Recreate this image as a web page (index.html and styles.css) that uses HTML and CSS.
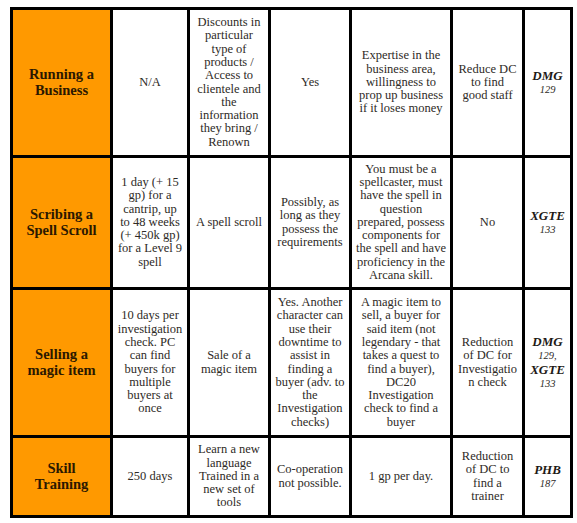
FILE: index.html
```html
<!DOCTYPE html>
<html lang="en">

<head>
    <meta charset="UTF-8">
    <title>Downtime activities</title>
    <link rel="stylesheet" href="styles.css">
</head>

<body>
    <table class="dt-table">
        <colgroup>
            <col class="c-name">
            <col class="c-time">
            <col class="c-gain">
            <col class="c-help">
            <col class="c-req">
            <col class="c-prof">
            <col class="c-src">
        </colgroup>
        <tr class="r1">
            <th>Running a Business</th>
            <td class="time">N/A</td>
            <td>Discounts in particular type of products / Access to clientele and the information they bring / Renown</td>
            <td>Yes</td>
            <td>Expertise in the business area, willingness to prop up business if it loses money</td>
            <td class="prof">Reduce DC to find good staff</td>
            <td class="src"><b>DMG</b><br><span>129</span></td>
        </tr>
        <tr class="r2">
            <th>Scribing a Spell Scroll</th>
            <td class="time">1 day (+ 15 gp) for a cantrip, up to 48 weeks (+ 450k gp) for a Level 9 spell</td>
            <td>A spell scroll</td>
            <td>Possibly, as long as they possess the requirements</td>
            <td>You must be a spellcaster, must have the spell in question prepared, possess components for the spell and have proficiency in the Arcana skill.</td>
            <td class="prof">No</td>
            <td class="src"><b>XGTE</b><br><span>133</span></td>
        </tr>
        <tr class="r3">
            <th>Selling a magic item</th>
            <td class="time">10 days per investigation check. PC can find buyers for multiple buyers at once</td>
            <td>Sale of a magic item</td>
            <td>Yes. Another character can use their downtime to assist in finding a buyer (adv. to the Investigation checks)</td>
            <td>A magic item to sell, a buyer for said item (not legendary - that takes a quest to find a buyer), DC20 Investigation check to find a buyer</td>
            <td class="prof">Reduction of DC for Investigation check</td>
            <td class="src"><b>DMG</b><br><span>129,</span><br><b>XGTE</b><br><span>133</span></td>
        </tr>
        <tr class="r4">
            <th>Skill Training</th>
            <td class="time">250 days</td>
            <td>Learn a new language Trained in a new set of tools</td>
            <td>Co-operation not possible.</td>
            <td>1 gp per day.</td>
            <td class="prof">Reduction of DC to find a trainer</td>
            <td class="src"><b>PHB</b><br><span>187</span></td>
        </tr>
    </table>
</body>

</html>
```

FILE: styles.css
```css
* {
    margin: 0;
    padding: 0;
}

body {
    padding: 7px 10px;
    background: #fff;
    font-family: "Liberation Serif", serif;
    color: #2e2a26;
}

.dt-table {
    width: 560px;
    table-layout: fixed;
    border-collapse: collapse;
    border: 3px solid #000;
}

.c-name { width: 100px; }
.c-time { width: 77px; }
.c-gain { width: 81px; }
.c-help { width: 81px; }
.c-req { width: 101px; }
.c-prof { width: 72px; }
.c-src { width: 48px; }

.dt-table th,
.dt-table td {
    border: 3px solid #000;
    text-align: center;
    vertical-align: middle;
    padding: 0 3px;
    font-family: "Liberation Serif", serif;
    font-size: 12.5px;
    line-height: 13.3px;
}

.dt-table th {
    background: #ff9900;
    color: #2b1800;
    font-size: 14.5px;
    line-height: 15.7px;
    padding: 0 8px;
}

.r1 { height: 148px; }
.r2 { height: 132px; }
.r3 { height: 148px; }
.r4 { height: 80px; }

.dt-table td.time {
    padding: 0 4.5px;
}

.dt-table td.prof {
    padding: 0 4.5px;
    overflow-wrap: break-word;
}

.dt-table td.src {
    font-style: italic;
    padding: 0 2px;
}

.src b {
    font-size: 13px;
    color: #1e1a16;
}

.src span {
    font-size: 10.5px;
}
```
